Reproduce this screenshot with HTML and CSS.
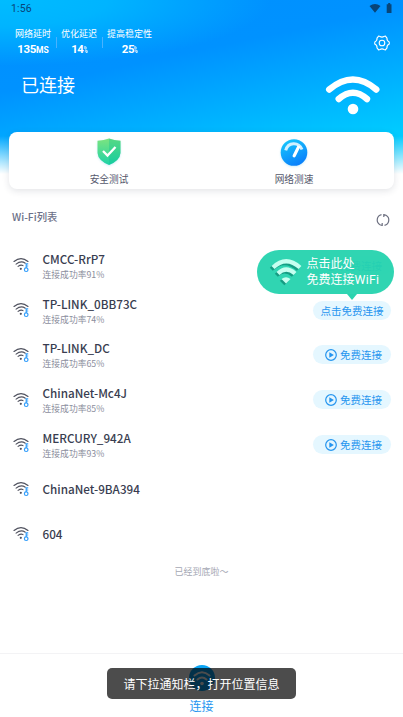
FILE: index.html
```
<!DOCTYPE html>
<html lang="zh-CN">
<head>
<meta charset="utf-8">
<title>Wi-Fi</title>
<link rel="stylesheet" href="styles.css">
</head>
<body>
<svg width="0" height="0" class="defs">
  <defs>
    <symbol id="wifi-key" viewBox="0 0 17 16">
      <g fill="none" stroke="#50525f" stroke-width="1.15" stroke-linecap="round">
        <path d="M1 4.5Q8 -1.3 15 4.5"/><path d="M3.1 7.1Q8 3.2 12.3 6.2"/><path d="M5.1 9.4Q8 7.2 10 8.6"/>
      </g>
      <circle cx="7.8" cy="11.8" r="1.1" fill="#50525f"/>
      <g fill="none" stroke="#319dfb" stroke-width="1.2"><circle cx="13.2" cy="12.7" r="1.8"/><path d="M13.2 10.9V6.3M13.2 6.9H15.2M13.2 9H15.2"/></g>
    </symbol>
    <symbol id="play" viewBox="0 0 12 12">
      <circle cx="6" cy="6" r="5.3" fill="none" stroke="#2595ef" stroke-width="1.2"/><path d="M4.3 3.3L8.9 6L4.3 8.7Z" fill="#2595ef"/>
    </symbol>
  </defs>
</svg>
<div class="screen">
  <header class="hero">
    <div class="status"><span>1:56</span>
      <svg class="status-icons" width="24" height="12" viewBox="0 0 24 12"><path d="M.5 3Q6 -1 11.5 3L6 9.7Z M18 1.2H19.2V0H21.2V1.2H22.5V10H17.7V1.2Z" fill="#084578"/></svg>
    </div>
    <div class="top">
      <div class="stats">
        <div class="stat"><span>网络延时</span><b>135<small>MS</small></b></div>
        <div class="stat"><span>优化延迟</span><b>14<small class="pct">%</small></b></div>
        <div class="stat"><span>提高稳定性</span><b>25<small class="pct">%</small></b></div>
      </div>
      <svg class="gear" width="16" height="16" viewBox="0 0 16 16" fill="none" stroke="#fff" stroke-width="1.1" stroke-linejoin="round"><path d="M4.6 1.1L6 1.6Q8 2.6 10 1.6L11.4 1.1L13 3.2Q12.6 5.8 15.2 7L15.3 9Q12.6 10.2 13 12.8L11.4 14.9L10 14.4Q8 13.4 6 14.4L4.6 14.9L3 12.8Q3.4 10.2.7 9L.8 7Q3.4 5.8 3 3.2Z"/><circle cx="8" cy="8" r="2.8"/></svg>
    </div>
    <div class="connection">
      <h1>已连接</h1>
      <svg width="56" height="40" viewBox="0 0 56 40" fill="none" stroke="#fff" stroke-width="6.4" stroke-linecap="round"><path d="M4.2 13.5Q28 -6.5 51.3 13.5"/><path d="M13.7 23Q28 10.5 42 23"/><circle cx="28" cy="33" r="5.3" fill="#fff" stroke="none"/></svg>
    </div>
  </header>
  <section class="tools">
    <div class="tool">
      <svg width="28" height="32" viewBox="0 0 28 32"><defs><linearGradient id="sg" x2="0" y2="1"><stop stop-color="#7ce47f"/><stop offset="1" stop-color="#1ed2a7"/></linearGradient></defs><path d="M14 2.5Q19 4.3 25.5 4.8V17Q25 24.5 14 29Q3 24.5 2.5 17V4.8Q9 4.3 14 2.5Z" fill="url(#sg)"/><path d="M14 2.5Q19 4.3 25.5 4.8V17Q25 24.5 14 29Z" fill="#00bf91" opacity=".3"/><path d="M8 15L12.5 19.5L20.5 11" fill="none" stroke="#fff" stroke-width="2.3"/></svg>
      <span>安全测试</span>
    </div>
    <div class="tool">
      <svg class="meter" width="28" height="32" viewBox="0 0 28 32"><defs><linearGradient id="mg" x1=".2" x2=".7" y2="1"><stop stop-color="#17c8fc"/><stop offset="1" stop-color="#097cfb"/></linearGradient></defs><circle cx="14" cy="16.5" r="13.3" fill="url(#mg)"/><path d="M5.7 14.4C8 6 18.5 5.5 22 13.5" fill="none" stroke="#d0f0ff" stroke-width="3"/><path d="M17.5 9.5L20.5 10.5L15.6 20.5Q14.3 22.3 12.8 20.8Q12.3 20 12.8 19Z" fill="#fff"/></svg>
      <span>网络测速</span>
    </div>
  </section>
  <div class="list-head"><h2>Wi-Fi列表</h2>
    <svg width="14" height="14" viewBox="0 0 14 14" fill="none" stroke="#6d7080" stroke-width="1.2"><path d="M5.5 1.7A5.4 5.4 0 0 0 4 11.7L6.2 12.5M6.2 10V13M8.5 12.3A5.4 5.4 0 0 0 10 2.3L7.8 1.5M7.8 4V1"/></svg>
  </div>
  <ul class="networks">
    <li><svg class="sig"><use href="#wifi-key"/></svg><div class="info"><strong>CMCC-RrP7</strong><small>连接成功率91%</small></div><span class="join"><svg><use href="#play"/></svg>免费连接</span></li>
    <li><svg class="sig"><use href="#wifi-key"/></svg><div class="info"><strong>TP-LINK_0BB73C</strong><small>连接成功率74%</small></div>
      <span class="join">点击免费连接</span>
      <div class="bubble">
        <svg width="36" height="30" viewBox="0 0 36 30"><g fill="none" stroke="#159d83" stroke-width="4.2" transform="translate(-1.7 1.7)"><path d="M5 10.5Q18 -2 32 10.5"/><path d="M10 16.5Q18 8.5 27 16.5"/><path d="M13.5 22L18 26.5L22.5 22Q18 18.5 13.5 22Z" fill="#159d83" stroke="none"/></g><g fill="none" stroke="#c5fff0" stroke-width="4.2"><path d="M5 10.5Q18 -2 32 10.5"/><path d="M10 16.5Q18 8.5 27 16.5"/><path d="M13.5 22L18 26.5L22.5 22Q18 18.5 13.5 22Z" fill="#c5fff0" stroke="none"/></g></svg>
        <p>点击此处<br>免费连接<span class="latin">WiFi</span></p>
      </div></li>
    <li><svg class="sig"><use href="#wifi-key"/></svg><div class="info"><strong>TP-LINK_DC</strong><small>连接成功率65%</small></div><span class="join"><svg><use href="#play"/></svg>免费连接</span></li>
    <li><svg class="sig"><use href="#wifi-key"/></svg><div class="info"><strong>ChinaNet-Mc4J</strong><small>连接成功率85%</small></div><span class="join"><svg><use href="#play"/></svg>免费连接</span></li>
    <li><svg class="sig"><use href="#wifi-key"/></svg><div class="info"><strong>MERCURY_942A</strong><small>连接成功率93%</small></div><span class="join"><svg><use href="#play"/></svg>免费连接</span></li>
    <li><svg class="sig"><use href="#wifi-key"/></svg><div class="info"><strong>ChinaNet-9BA394</strong></div></li>
    <li><svg class="sig"><use href="#wifi-key"/></svg><div class="info"><strong>604</strong></div></li>
  </ul>
  <p class="end">已经到底啦～</p>
  <nav class="tabbar">
    <svg width="26" height="26" viewBox="0 0 26 26"><circle cx="13" cy="13" r="13" fill="#0aa4f4"/><g fill="none" stroke="#fff" stroke-width="2" stroke-linecap="round"><path d="M5.5 10.5Q13 4 20.5 10.5"/><path d="M8.5 14.5Q13 10.5 17.5 14.5"/></g><circle cx="13" cy="18.5" r="1.8" fill="#fff"/></svg>
    <span>连接</span>
  </nav>
  <div class="toast">请下拉通知栏，打开位置信息</div>
</div>
</body>
</html>
```
FILE: styles.css
```
* { box-sizing: border-box; margin: 0; padding: 0; }
body { font-family: "Noto Sans CJK SC", sans-serif; background: #fff; overflow: hidden; }
svg { display: block; flex: none; }
.defs { position: absolute; }
.screen { position: relative; width: 403px; height: 717px; display: flex; flex-direction: column; }

.hero {
  height: 178px;
  flex: none;
  color: #fff;
  background:
    linear-gradient(to bottom, rgba(255, 255, 255, 0) 136px, #fff 174px),
    radial-gradient(ellipse 270px 66px at 0 0, #00bcff 0%, #00b4ff 40%, rgba(0, 146, 255, 0) 100%),
    linear-gradient(168deg, #0090ff 0%, #0092ff 35%, #00b2ff 62%, #00cbff 82%);
}
.status { height: 18px; padding: 0 10px 0 11px; display: flex; justify-content: space-between; align-items: center; font: 10.5px/18px Roboto, sans-serif; color: #084578; letter-spacing: .1px; }
.top { height: 44px; padding: 9px 13px 0 15px; display: flex; justify-content: space-between; }
.gear { margin-top: 8px; }
.stats { display: flex; }
.stat { display: flex; flex-direction: column; align-items: center; }
.stat + .stat { margin-left: 5px; padding-left: 5px; background: linear-gradient(#49b2ff, #49b2ff) 0 10px / 1px 11px no-repeat; }
.stat span { font-size: 9px; line-height: 14px; }
.stat b { font: bold 11.5px/15px Roboto, sans-serif; margin-top: 1px; letter-spacing: -.35px; }
.stat small { font-size: 8.5px; letter-spacing: 0; }
.stat .pct { font-size: 8.5px; display: inline-block; transform: scaleX(.6); transform-origin: left; margin-right: -3px; }
.connection { padding: 0 22px 0 21px; display: flex; justify-content: space-between; }
.connection h1 { font-size: 18px; font-weight: 400; line-height: 26px; margin-top: 9px; }
.connection svg { margin-top: 14px; }

.tools { height: 57px; margin: -46px 9px 0; border-radius: 8px; background: #fff; box-shadow: 0 2px 7px rgba(40, 50, 70, .13); display: flex; padding: 4px 7.5px 0; flex: none; }
.tool { flex: 1 1 0; display: flex; flex-direction: column; align-items: center; font-size: 9.7px; line-height: 15px; color: #55586c; }
.tool svg { filter: drop-shadow(0 1px 1px rgba(20, 170, 220, .2)); }
.tool span { margin-top: 4px; }

.list-head { height: 54px; padding: 19px 13px 0 12px; display: flex; justify-content: space-between; flex: none; }
.list-head h2 { font-size: 10.3px; line-height: 18px; font-weight: 500; color: #6c7088; }
.list-head svg { margin-top: 5px; }

.networks { list-style: none; }
.networks li { position: relative; height: 44.8px; padding: 0 12px 0 13px; display: flex; align-items: center; }
.sig { width: 17px; height: 16px; }
.info { margin-left: 12.5px; flex: 1; display: flex; flex-direction: column; }
.info strong { font-size: 11.7px; line-height: 18px; font-weight: 500; color: #393d50; }
.info small { font-size: 8.8px; line-height: 13px; color: #8b8e9d; }
.join { width: 78px; height: 19px; border-radius: 10px; background: #e5f7ff; color: #2595ef; font-size: 10.5px; line-height: 19px; display: flex; align-items: center; justify-content: center; gap: 3px; }
.join svg { width: 12px; height: 12px; }
.join:has(svg) { padding-left: 3px; }
.bubble { position: absolute; right: 9px; top: -38px; width: 137px; height: 44px; border-radius: 22px; background: rgba(37, 211, 174, .95); color: #fff; display: flex; align-items: center; padding-left: 11px; gap: 2.5px; }
.bubble p { font-size: 12px; line-height: 16px; white-space: nowrap; }
.bubble .latin { font-family: Roboto, sans-serif; font-size: 12.3px; letter-spacing: .3px; }
.bubble::after { content: ""; position: absolute; left: 90px; top: 44px; border: 5px solid transparent; border-top: 6px solid #2ad3af; border-bottom: 0; }
.end { text-align: center; font-size: 9px; line-height: 14px; color: #a5a8b4; margin-top: 8px; }
.tabbar { margin-top: auto; height: 64px; border-top: 1px solid #f3f3f5; padding-top: 11px; display: flex; flex-direction: column; align-items: center; color: #2595ef; font-size: 12px; line-height: 18px; }
.tabbar span { margin-top: 6px; }
.toast { position: absolute; left: 107px; top: 668px; width: 189px; height: 31px; border-radius: 5px; background: rgba(0, 0, 0, .7); color: #fff; text-align: center; font-size: 12px; line-height: 31px; white-space: nowrap; }
```
